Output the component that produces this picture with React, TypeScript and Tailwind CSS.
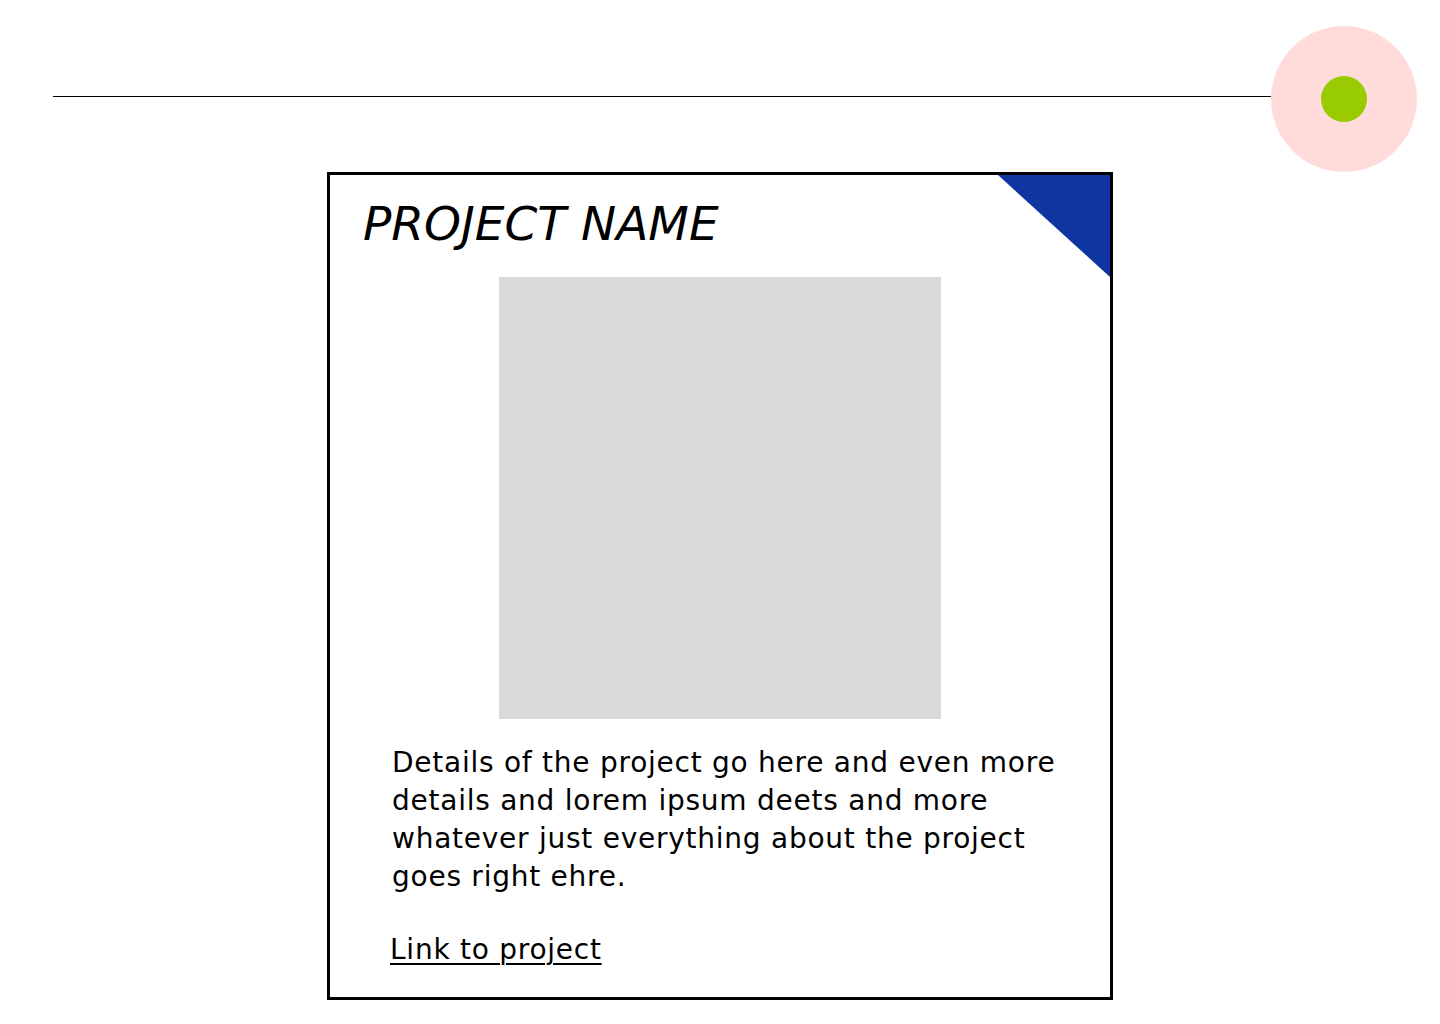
export default function App() {
  const body = "font-['DejaVu_Sans',sans-serif] text-[28px] leading-[38px] tracking-[0.75px] text-black";

  return (
    <div className="min-h-[1024px] w-[1440px] bg-white">
      {/* Cabecera: línea + círculo */}
      <header className="flex items-start pt-[26px] pl-[53px] pr-[23px]">
        <div className="mt-[70px] h-px flex-1 bg-black" />
        <div className="flex h-[146px] w-[146px] items-center justify-center rounded-full bg-[#ffdcd9]">
          <div className="h-[46px] w-[46px] rounded-full bg-[#99cc00]" />
        </div>
      </header>

      {/* Tarjeta del proyecto */}
      <section className="relative mx-auto flex w-[786px] flex-col border-[3px] border-black pt-[25px] pb-[28px]">
        <svg
          className="absolute top-0 right-0"
          width="112"
          height="102"
          viewBox="0 0 112 102"
        >
          <polygon points="0,0 112,0 112,102" fill="#0f35a0" />
        </svg>

        <h1 className="pl-[33px] font-['DejaVu_Sans',sans-serif] text-[47px] leading-none italic text-black">
          PROJECT NAME
        </h1>

        <div className="mx-auto mt-[30px] h-[442px] w-[442px] bg-[#d9d9d9]" />

        <div className="mt-[25px] flex flex-col pl-[60px]">
          <p className={`pl-[2px] ${body}`}>
            <span className="block">Details of the project go here and even more</span>
            <span className="block">details and lorem ipsum deets and more</span>
            <span className="block">whatever just everything about the project</span>
            <span className="block">goes right ehre.</span>
          </p>
          <a
            href="#"
            className={`mt-[35px] self-start underline decoration-2 underline-offset-[4px] ${body}`}
          >
            Link to project
          </a>
        </div>
      </section>
    </div>
  );
}
